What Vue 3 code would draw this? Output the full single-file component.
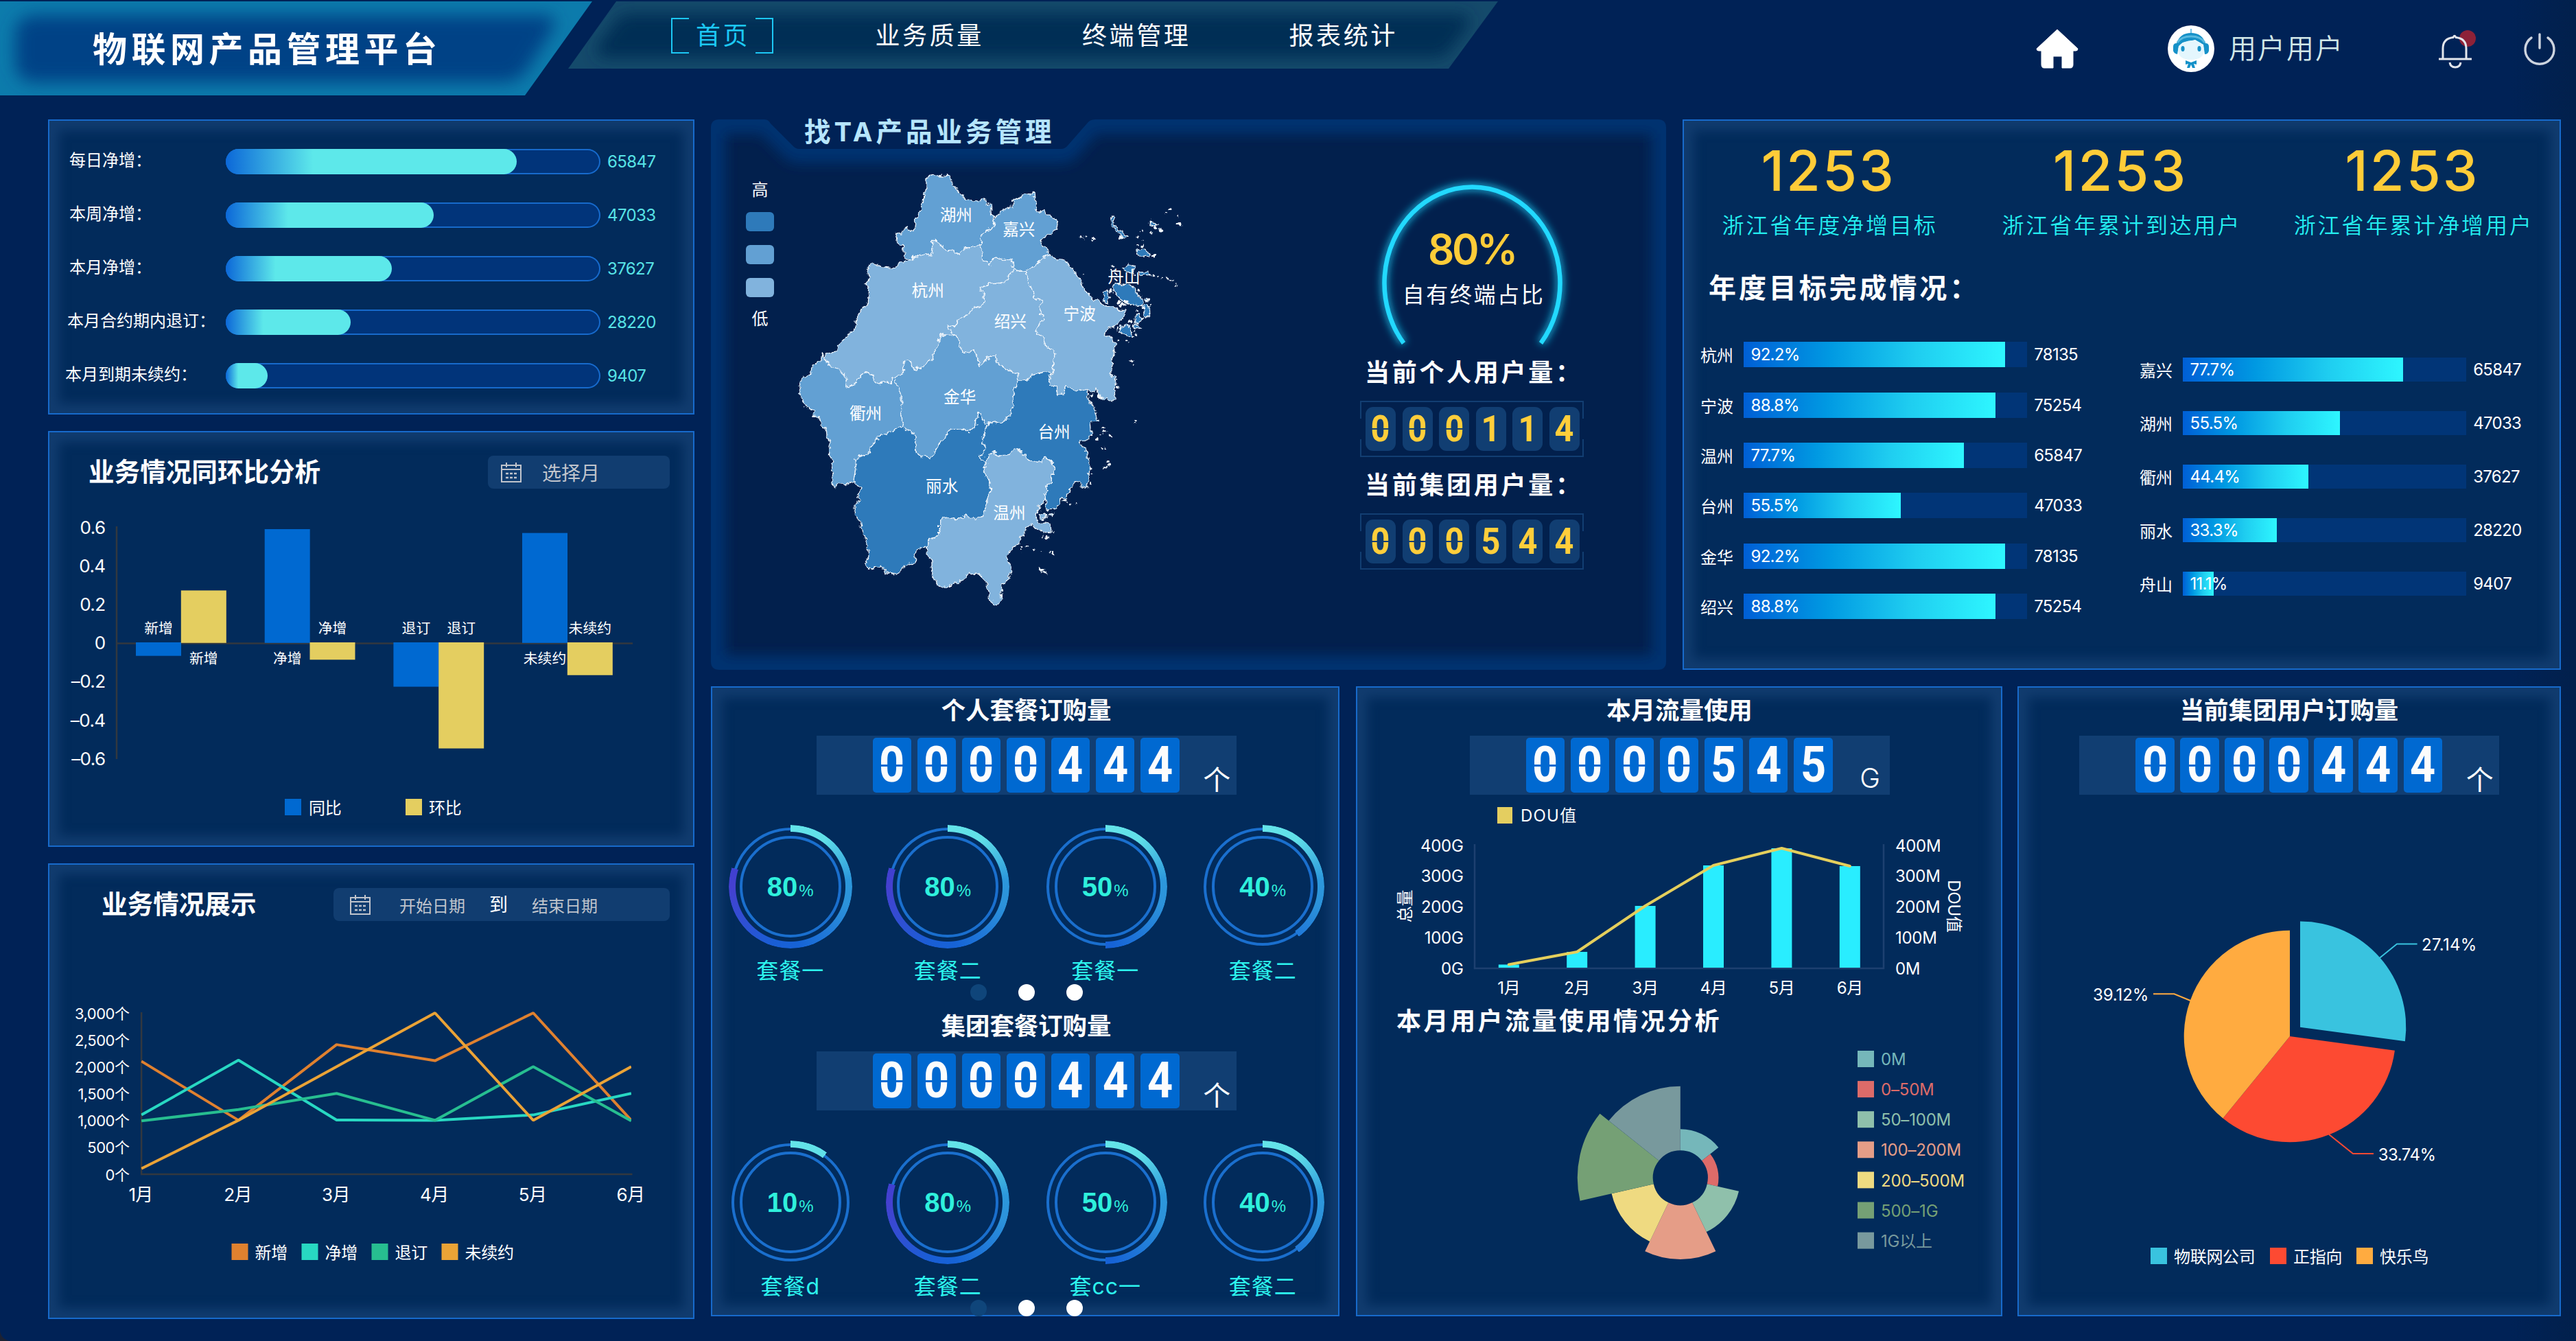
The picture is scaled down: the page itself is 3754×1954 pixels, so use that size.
<script setup>
const navItems = ['首页', '业务质量', '终端管理', '报表统计']

const growth = [
  { label: '每日净增：', value: 65847, pct: 77.7, indent: 29 },
  { label: '本周净增：', value: 47033, pct: 55.5, indent: 29 },
  { label: '本月净增：', value: 37627, pct: 44.4, indent: 29 },
  { label: '本月合约期内退订：', value: 28220, pct: 33.3, indent: 26 },
  { label: '本月到期未续约：', value: 9407, pct: 11.2, indent: 23 },
]

/* year-on-year / month-on-month bars */
const ratioTicks = [0.6, 0.4, 0.2, 0, -0.2, -0.4, -0.6]
const ratioY = (v) => 936.8 - v * 281
const ratioBars = [
  { name: '新增', x: 197, a: -0.07, b: 0.272 },
  { name: '净增', x: 384.7, a: 0.59, b: -0.09 },
  { name: '退订', x: 572.4, a: -0.23, b: -0.55 },
  { name: '未续约', x: 760, a: 0.57, b: -0.17 },
].flatMap((g) => [
  { name: g.name, x: g.x, v: g.a, color: '#0069d1' },
  { name: g.name, x: g.x + 65.8, v: g.b, color: '#e4ce60' },
])

/* trend lines */
const trendX = [205.6, 347, 490, 633.4, 776.6, 919.4]
const trendY = (v) => 1710.6 - (v / 3000) * 234.6
const trend = [
  { name: '新增', color: '#e0812f', data: [2100, 1000, 2410, 2110, 3000, 1000], x: 337 },
  { name: '净增', color: '#28d8c2', data: [1100, 2120, 1005, 1000, 1100, 1500], x: 439 },
  { name: '退订', color: '#27be90', data: [990, 1200, 1500, 1000, 2000, 990], x: 541 },
  { name: '未续约', color: '#eba336', data: [100, 1000, 2000, 3000, 1000, 2000], x: 643 },
]
const trendTicks = ['3,000个', '2,500个', '2,000个', '1,500个', '1,000个', '500个', '0个']
const months = ['1月', '2月', '3月', '4月', '5月', '6月']
const line = (xs, ys) => xs.map((x, i) => `${x},${ys[i]}`).join(' ')

/* province map */
const HIGH = '#2e7aba'
const MID = '#62a0d3'
const LOW = '#81b3dd'
const regions = [
  { name: '湖州', lx: 657, ly: 208, fill: MID, pts: '560,90 575,80 600,77 636,80 645,105 660,130 690,157 720,165 752,157 755,178 768,168 772,205 783,222 780,242 763,257 742,268 737,305 708,314 690,315 677,322 672,336 650,330 625,320 600,303 592,293 579,292 580,320 577,345 560,337 540,340 520,345 500,356 487,345 485,308 470,305 459,292 463,270 480,268 485,255 500,250 505,262 522,252 524,225 540,200 547,165 553,145 560,120' },
  { name: '嘉兴', lx: 862, ly: 257, fill: MID, pts: '783,222 800,200 820,190 838,183 840,155 865,155 877,140 900,140 912,130 915,180 925,200 945,190 952,212 975,215 988,235 985,255 960,275 932,292 945,315 963,336 940,348 915,375 883,391 862,393 843,385 838,352 775,352 766,375 756,358 743,355 740,325 737,305 742,268 763,257 780,242' },
  { name: '杭州', lx: 565, ly: 456, fill: LOW, pts: '500,356 520,345 540,340 560,337 577,345 580,320 579,292 592,293 600,303 625,320 650,330 672,336 677,322 690,315 708,314 737,305 740,325 743,355 756,358 766,375 775,352 838,352 843,385 815,432 780,430 745,440 733,447 748,465 750,495 735,508 710,512 695,535 665,550 655,572 630,572 640,592 655,602 610,600 600,615 595,640 585,655 580,680 560,690 548,706 530,706 522,717 512,700 510,687 485,690 485,730 460,740 450,738 448,760 430,755 398,760 385,735 370,718 350,730 335,745 325,765 300,768 297,740 278,712 250,705 225,675 230,662 265,655 270,635 300,605 330,575 333,540 358,510 368,500 372,440 358,432 375,413 366,385 385,365 415,378 455,382 475,360 492,360' },
  { name: '绍兴', lx: 834, ly: 557, fill: LOW, pts: '843,385 862,393 883,391 900,440 915,480 940,490 930,515 943,550 920,575 920,597 940,605 950,640 977,650 973,718 940,722 905,730 888,748 860,754 857,725 835,715 820,713 790,690 785,665 765,670 735,706 728,680 712,648 685,660 665,635 667,615 655,602 640,592 630,572 655,572 665,550 695,535 710,512 735,508 750,495 748,465 733,447 745,440 780,430 815,432' },
  { name: '宁波', lx: 1060, ly: 532, fill: LOW, pts: '883,391 915,375 940,348 963,336 990,355 1013,357 1050,400 1075,450 1105,488 1120,488 1145,505 1175,505 1180,520 1213,520 1205,540 1180,570 1155,580 1137,605 1165,612 1177,630 1168,670 1168,700 1160,735 1175,735 1175,800 1165,817 1150,805 1130,810 1118,775 1110,788 1085,778 1060,783 1015,768 1005,790 990,800 983,770 962,765 963,735 973,718 977,650 950,640 940,605 920,597 920,575 943,550 930,515 940,490 915,480 900,440' },
  { name: '衢州', lx: 362, ly: 856, fill: MID, pts: '225,675 250,705 278,712 297,740 300,768 325,765 335,745 350,730 370,718 385,735 398,760 430,755 448,760 450,738 460,740 462,765 480,800 478,850 483,900 475,900 440,920 410,925 385,955 372,990 350,995 327,1005 330,1030 322,1080 300,1088 270,1085 260,1097 250,1085 257,1060 248,1040 255,1010 245,1000 247,950 235,930 233,900 218,898 210,865 190,865 195,850 165,835 150,805 145,770 155,735 180,733 188,700 217,685 218,662' },
  { name: '金华', lx: 669, ly: 803, fill: MID, pts: '655,602 667,615 665,635 685,660 712,648 728,680 735,706 765,670 785,665 790,690 820,713 857,725 860,754 845,785 845,825 835,865 800,885 765,890 750,890 738,865 728,852 723,895 700,915 680,908 640,905 610,945 590,975 578,997 545,998 527,985 520,920 495,910 483,900 478,850 480,800 462,765 460,740 485,730 485,690 510,687 512,700 522,717 530,706 548,706 560,690 580,680 585,655 595,640 600,615 610,600' },
  { name: '丽水', lx: 611, ly: 1095, fill: HIGH, pts: '483,900 495,910 520,920 527,985 545,998 578,997 590,975 610,945 640,905 680,908 700,915 723,895 728,852 738,865 750,890 765,890 750,920 742,950 755,975 735,995 750,1010 760,1015 745,1045 765,1075 768,1110 757,1140 757,1160 745,1190 715,1200 690,1187 660,1203 615,1193 602,1210 602,1250 565,1275 562,1295 527,1298 522,1345 495,1350 465,1382 430,1377 425,1363 395,1357 375,1367 362,1345 372,1325 367,1285 355,1250 345,1210 328,1185 327,1155 345,1140 340,1120 345,1100 322,1080 330,1030 327,1005 350,995 372,990 385,955 410,925 440,920 475,900' },
  { name: '台州', lx: 977, ly: 918, fill: HIGH, pts: '860,754 888,748 905,730 940,722 968,718 963,735 962,765 983,770 990,800 1005,790 1015,768 1060,783 1085,778 1090,815 1103,825 1118,878 1095,880 1098,910 1095,938 1060,950 1085,985 1095,1040 1090,1075 1080,1097 1065,1090 1063,1078 1045,1075 1035,1100 1012,1135 993,1130 995,1150 985,1170 955,1173 948,1135 955,1087 968,1085 970,1055 982,1040 968,1015 945,997 937,1015 885,1005 865,975 845,970 835,990 795,995 780,978 765,990 760,1015 750,1010 735,995 755,975 742,950 750,920 765,890 800,885 835,865 845,825 845,785' },
  { name: '温州', lx: 831, ly: 1182, fill: LOW, pts: '760,1015 765,990 780,978 795,995 835,990 845,970 865,975 885,1005 937,1015 945,997 968,1015 982,1040 970,1055 968,1085 955,1087 948,1135 930,1160 915,1200 930,1213 965,1215 968,1243 945,1245 920,1235 905,1218 885,1235 860,1280 840,1295 823,1328 838,1360 832,1400 807,1415 803,1450 800,1475 785,1481 765,1465 763,1430 745,1390 723,1377 690,1385 665,1410 650,1402 640,1418 600,1423 580,1385 577,1330 560,1315 565,1275 602,1250 602,1210 615,1193 660,1203 690,1187 715,1200 745,1190 757,1160 757,1140 768,1110 765,1075 745,1045' },
]
const islands = [
  '1163,213 1172,212 1175,245 1200,265 1215,280 1203,282 1190,266 1168,248',
  '1170,445 1178,430 1195,438 1220,433 1240,450 1255,475 1268,482 1262,505 1235,502 1200,488 1175,465',
  '1137,460 1150,455 1160,480 1150,497 1137,490',
  '1200,382 1222,368 1240,378 1236,400 1216,396',
  '1250,320 1270,318 1292,335 1285,343 1252,342',
  '1195,575 1210,560 1228,580 1230,603 1215,605 1195,590',
  '1265,505 1288,505 1290,530 1278,545 1270,525',
  '1240,545 1255,530 1262,548 1250,565 1238,560',
  '1233,565 1252,570 1258,578 1240,580',
  '1255,392 1285,395 1288,405 1258,403',
  '1275,480 1285,478 1285,492 1275,495',
  '1292,228 1300,238 1315,238 1310,247 1290,243',
]
const wenIsles = ['928,1185 950,1182 955,1195 935,1202', '960,1185 975,1183 970,1193']
const dots = [
  [1356, 190, 5], [1343, 202, 4], [1380, 213, 4], [1385, 238, 8], [1293, 228, 4], [1310, 252, 6], [1325, 258, 6],
  [1267, 262, 3], [1252, 278, 3], [1256, 265, 2], [1294, 268, 3], [1070, 285, 4], [1080, 276, 3], [1106, 288, 3], [1073, 402, 2],
  [1250, 308, 4], [1265, 308, 5], [1262, 292, 3], [1303, 342, 5], [1198, 283, 6], [1212, 276, 4],
  [1170, 376, 5], [1163, 388, 3], [1172, 392, 3], [1298, 405, 4], [1313, 408, 4], [1330, 416, 3], [1348, 416, 4],
  [1357, 420, 4], [1363, 424, 3], [1378, 440, 4], [1240, 408, 4], [1162, 455, 6], [1253, 455, 4],
  [1190, 492, 6], [1202, 500, 7], [1216, 494, 6], [1228, 502, 5], [1210, 488, 5], [1195, 505, 5], [1280, 488, 6], [1295, 500, 3],
  [1248, 520, 4], [1270, 512, 5], [1225, 556, 5], [1185, 580, 4], [1186, 567, 3], [1240, 590, 4], [1246, 600, 4], [1235, 608, 5],
  [1217, 621, 3], [1187, 620, 3], [1265, 545, 6], [1284, 540, 4], [1174, 657, 3], [1230, 683, 6], [1235, 700, 3],
  [1180, 745, 3], [1188, 770, 7], [1177, 760, 4], [1128, 804, 6], [1097, 797, 5], [1243, 878, 4], [1240, 884, 3],
  [1135, 905, 5], [1143, 916, 5], [1160, 932, 5], [1118, 940, 6], [1128, 925, 3], [1130, 970, 3], [1142, 968, 3],
  [1150, 1012, 6], [1155, 1025, 6], [1145, 1032, 5], [1087, 1055, 5], [1104, 1050, 3], [1086, 1098, 3], [1096, 1082, 3],
  [1010, 1140, 6], [1020, 1146, 4], [1030, 1155, 3], [1050, 1152, 4], [940, 1257, 3], [953, 1260, 5], [974, 1244, 2],
  [872, 1293, 4], [890, 1288, 4], [908, 1298, 4], [870, 1304, 3], [935, 1308, 2], [963, 1310, 3], [973, 1313, 4],
  [932, 1364, 5], [940, 1368, 6], [946, 1376, 4], [937, 1377, 4],
]

const stats = ['浙江省年度净增目标', '浙江省年累计到达用户', '浙江省年累计净增用户']
const cityColumns = [
  {
    kind: 'six',
    rows: [
      ['杭州', 92.2, 78135], ['宁波', 88.8, 75254], ['温州', 77.7, 65847],
      ['台州', 55.5, 47033], ['金华', 92.2, 78135], ['绍兴', 88.8, 75254],
    ],
  },
  {
    kind: 'five',
    rows: [
      ['嘉兴', 77.7, 65847], ['湖州', 55.5, 47033], ['衢州', 44.4, 37627],
      ['丽水', 33.3, 28220], ['舟山', 11.1, 9407],
    ],
  },
]
const userCounts = [
  { title: '当前个人用户量：', digits: '000114' },
  { title: '当前集团用户量：', digits: '000544' },
]

const packages = [
  {
    title: '个人套餐订购量',
    rings: [['套餐一', 80], ['套餐二', 80], ['套餐一', 50], ['套餐二', 40]],
  },
  {
    title: '集团套餐订购量',
    rings: [['套餐d', 10], ['套餐二', 80], ['套cc一', 50], ['套餐二', 40]],
  },
]

/* traffic chart */
const flowX = [0, 1, 2, 3, 4, 5].map((i) => 2198.8 + i * 99.4)
const flowTop = [1405.5, 1387, 1320, 1261, 1236, 1262]
const flowTicks = [400, 300, 200, 100, 0]

const polar = (cx, cy, r, deg) => {
  const a = ((deg - 90) * Math.PI) / 180
  return `${(cx + r * Math.cos(a)).toFixed(2)} ${(cy + r * Math.sin(a)).toFixed(2)}`
}
const sector = (cx, cy, r0, r1, a0, a1) => {
  const big = a1 - a0 > 180 ? 1 : 0
  const inner = r0 ? `L${polar(cx, cy, r0, a1)}A${r0} ${r0} 0 ${big} 0 ${polar(cx, cy, r0, a0)}` : `L${cx} ${cy}`
  return `M${polar(cx, cy, r1, a0)}A${r1} ${r1} 0 ${big} 1 ${polar(cx, cy, r1, a1)}${inner}Z`
}
const rose = [
  ['0M', 71, '#75b7ba'], ['0–50M', 55.7, '#dd6b69'], ['50–100M', 87.4, '#8fc0ab'], ['100–200M', 118.8, '#e59d87'],
  ['200–500M', 102.8, '#efda81'], ['500–1G', 150, '#75a075'], ['1G以上', 133.5, '#78999d'],
].map(([name, r, color], i) => ({
  name, color, y: 1542 + i * 44.1,
  d: sector(2448.8, 1715.3, 40, r, (i * 360) / 7, ((i + 1) * 360) / 7),
}))

const pie = [
  { color: '#39c3df', d: sector(3352, 1496.7, 0, 154.3, 0, 97.7), lead: '3468,1395.7 3493,1375.5 3522.6,1375.5', text: '27.14%', x: 3529, w: 80 },
  { color: '#fd4a32', d: sector(3337, 1510, 0, 154.3, 97.7, 219.2), lead: '3394,1653 3429,1681 3459,1681', text: '33.74%', x: 3465.7, w: 84 },
  { color: '#ffab40', d: sector(3337, 1510, 0, 154.3, 219.2, 360), lead: '3192,1458 3168.4,1448.3 3138,1448.3', text: '39.12%', x: 3050, w: 81 },
]
const pieLabelY = [1376, 1682, 1449]
const pieLegend = [
  ['物联网公司', '#39c3df', 3134], ['正指向', '#fd4a32', 3308], ['快乐鸟', '#ffab40', 3434],
]
</script>

<template>
  <div class="page">
    <header class="top">
      <svg class="top-shape" viewBox="0 0 2200 144" width="2200" height="144">
        <defs>
          <clipPath id="brandClip"><path d="M0 2H863L765 139H0Z" /></clipPath>
          <clipPath id="navClip"><path d="M898 2H2183L2111 100H828Z" /></clipPath>
          <filter id="soft" x="-10%" y="-40%" width="120%" height="180%"><feGaussianBlur stdDeviation="12" /></filter>
          <filter id="soft2" x="-10%" y="-40%" width="120%" height="180%"><feGaussianBlur stdDeviation="11" /></filter>
        </defs>
        <g clip-path="url(#brandClip)">
          <rect width="870" height="140" fill="#0c7bac" />
          <path d="M50 22H800Q812 24 806 42L768 102Q756 120 732 120H50Q22 118 22 90V48Q24 24 50 22Z" fill="#004286" filter="url(#soft)" />
        </g>
        <g clip-path="url(#navClip)">
          <rect x="820" width="1370" height="110" fill="#144a6b" />
          <path d="M918 20H2130Q2146 22 2138 40L2112 74Q2106 84 2090 84H880Q864 82 872 66L896 34Q902 20 918 20Z" fill="#022e55" filter="url(#soft2)" />
        </g>
      </svg>
      <h1 class="brand">物联网产品管理平台</h1>
      <nav class="nav">
        <a v-for="(n, i) in navItems" :key="n" :class="['nav-item', { active: i === 0 }]">{{ n }}</a>
      </nav>
      <div class="tools">
        <svg class="home" width="62" height="58" viewBox="0 0 62 58"><path d="M31 1 61 29Q61 32 58 32H54V52Q54 57 50 57H38V40H25V57H12Q8 57 8 52V32H4Q1 32 1 29Z" fill="#fff" stroke="#fff" stroke-width="1" stroke-linejoin="round" /></svg>
        <svg class="avatar" width="68" height="68" viewBox="0 0 68 68">
          <circle cx="34" cy="34" r="34" fill="#fff" />
          <path d="M34 5V13" stroke="#7cc6e8" stroke-width="2.500" />
          <path d="M8 31Q8 26 13 26Q18 11 34 11Q50 11 55 26Q60 26 60 31V37Q59 42 54 42L52 28 40 21 22 25 16 30 14 42Q9 41 8 37Z" fill="#1691c8" />
          <path d="M15 35Q17 26 25 24Q36 20 45 24Q52 27 53 35Q53 50 34 50Q15 50 15 35Z" fill="#e4f6fd" />
          <path d="M14 25Q20 16 34 16T54 25" fill="none" stroke="#59b9df" stroke-width="3" />
          <ellipse cx="22" cy="34" rx="2.600" ry="4" fill="#1691c8" /><ellipse cx="46" cy="34" rx="2.600" ry="4" fill="#1691c8" />
          <path d="M26 51 34 54 42 51V57L38 56 40 62H36L34 57 32 62H28L30 56 26 57Z" fill="#1691c8" />
        </svg>
        <span class="user">用户用户</span>
        <svg class="bell" width="62" height="60" viewBox="0 0 62 60" fill="none">
          <circle cx="49" cy="15" r="12" fill="#8d2238" />
          <path d="M7 45H55M13 45V30Q13 15 28 13.500Q30 9 32 13.500Q47 15 47 30V45" stroke="#e3e6ec" stroke-width="3" />
          <path d="M23 50Q24 57 31 57T39 50" stroke="#e3e6ec" stroke-width="3" />
        </svg>
        <svg class="power" width="48" height="48" viewBox="0 0 48 48" fill="none" stroke="#cdd4df" stroke-width="3.400" stroke-linecap="round"><path d="M24 3V23M12 8A21 21 0 1 0 36 8" /></svg>
      </div>
    </header>

    <main class="board">
      <section class="col-left">
        <div class="panel growth">
          <div v-for="g in growth" :key="g.label" class="growth-row">
            <span class="growth-label" :style="{ paddingLeft: g.indent + 'px' }">{{ g.label }}</span>
            <div class="growth-track"><div class="growth-fill" :style="{ width: g.pct + '%' }"></div></div>
            <span class="growth-value">{{ g.value }}</span>
          </div>
        </div>

        <div class="panel ratio">
          <div class="panel-head ratio-head">
            <h2>业务情况同环比分析</h2>
            <div class="picker month">
              <svg width="30" height="30" viewBox="0 0 30 30" fill="none" stroke="#c0c4cc" stroke-width="2"><path d="M1 5H29V29H1ZM1 11H29M8 1V8M22 1V8" /><path d="M7 17H23M7 23H23" stroke-dasharray="4 2" stroke-width="2.500" /></svg>
              <span>选择月</span>
            </div>
          </div>
          <svg class="chart" viewBox="71 712 938 520" width="938" height="520">
            <text v-for="t in ratioTicks" :key="t" class="t26" x="152.500" :y="ratioY(t)" dy=".36em" text-anchor="end">{{ String(t).replace('-', '–') }}</text>
            <path d="M169 767V1106M169 937.500H921" stroke="#33383f" stroke-width="2.500" fill="none" />
            <g v-for="(b, i) in ratioBars" :key="i">
              <rect :x="b.x" width="66" :y="Math.min(ratioY(b.v), 936)" :height="Math.abs(936.8 - ratioY(b.v))" :fill="b.color" />
              <text class="t21" :x="b.x + 33" :y="b.v < 0 ? 915.5 : 960" dy=".36em" text-anchor="middle">{{ b.name }}</text>
            </g>
            <rect x="414" y="1164" width="24" height="24" fill="#0069d1" />
            <text class="t24" x="449" y="1177" dy=".36em">同比</text>
            <rect x="590" y="1164" width="24" height="24" fill="#e4ce60" />
            <text class="t24" x="624" y="1177" dy=".36em">环比</text>
          </svg>
        </div>

        <div class="panel trend">
          <div class="panel-head trend-head">
            <h2>业务情况展示</h2>
            <div class="picker range">
              <svg width="30" height="30" viewBox="0 0 30 30" fill="none" stroke="#c0c4cc" stroke-width="2"><path d="M1 5H29V29H1ZM1 11H29M8 1V8M22 1V8" /><path d="M7 17H23M7 23H23" stroke-dasharray="4 2" stroke-width="2.500" /></svg>
              <span>开始日期</span><b>到</b><span>结束日期</span>
            </div>
          </div>
          <svg class="chart" viewBox="71.500 1342 938 578" width="938" height="578">
            <defs><clipPath id="trendClip"><rect x="205" y="1460" width="714.500" height="260" /></clipPath></defs>
            <text v-for="(t, i) in trendTicks" :key="t" class="t22" x="188" :y="1477 + i * 39.1" dy=".36em" text-anchor="end">{{ t }}</text>
            <path d="M205.600 1475V1711H921" stroke="#33383f" stroke-width="2.500" fill="none" />
            <g clip-path="url(#trendClip)">
              <polyline v-for="s in trend" :key="s.name" :points="line(trendX, s.data.map(trendY))" fill="none" :stroke="s.color" stroke-width="4" stroke-linejoin="bevel" />
            </g>
            <text v-for="(m, i) in months" :key="m" class="t26" :x="trendX[i] - 1" y="1740.500" dy=".36em" text-anchor="middle">{{ m }}</text>
            <g v-for="s in trend" :key="s.color">
              <rect :x="s.x" y="1812" width="24" height="24" :fill="s.color" />
              <text class="t24" :x="s.x + 34" y="1825" dy=".36em">{{ s.name }}</text>
            </g>
          </svg>
        </div>
      </section>

      <section class="col-right">
        <div class="row-top">
          <div class="map-panel">
            <svg class="map-frame" viewBox="1036 174 1392 802" width="1392" height="802">
              <defs>
                <path id="frame" d="M1048 174H1114Q1120 174 1123 180L1155 212Q1159 217 1165 217H1546Q1552 217 1556 212L1584 180Q1588 174 1596 174H2416Q2428 174 2428 186V964Q2428 976 2416 976H1048Q1036 976 1036 964V186Q1036 174 1048 174Z" />
                <clipPath id="frameClip"><use href="#frame" /></clipPath>
                <filter id="frameBlur" filterUnits="userSpaceOnUse" x="1000" y="140" width="1470" height="880"><feGaussianBlur stdDeviation="9" /></filter>
              </defs>
              <g clip-path="url(#frameClip)">
                <use href="#frame" fill="#02204d" />
                <use href="#frame" fill="none" stroke="#00326f" stroke-width="42" filter="url(#frameBlur)" />
              </g>
            </svg>
            <h2 class="map-title">找TA产品业务管理</h2>
            <div class="map-body">
              <div class="legend">
                <span>高</span>
                <i class="high"></i><i class="mid"></i><i class="low"></i>
                <span>低</span>
              </div>
              <svg class="map" viewBox="130 40 1300 1480" width="580.400" height="660.700">
                <defs>
                  <filter id="rough" filterUnits="userSpaceOnUse" x="100" y="20" width="1400" height="1500">
                    <feTurbulence type="fractalNoise" baseFrequency="0.055" numOctaves="3" seed="4" result="n" />
                    <feDisplacementMap in="SourceGraphic" in2="n" scale="20" xChannelSelector="R" yChannelSelector="G" />
                  </filter>
                </defs>
                <g filter="url(#rough)" stroke="#f2f7fc" stroke-width="2.800" stroke-linejoin="round">
                  <polygon v-for="r in regions" :key="r.name" :points="r.pts" :fill="r.fill" />
                  <polygon v-for="p in wenIsles" :key="p" :points="p" :fill="LOW" />
                  <polygon v-for="p in islands" :key="p" :points="p" :fill="HIGH" />
                </g>
                <g filter="url(#rough)" fill="#f2f7fc">
                  <ellipse v-for="(d, i) in dots" :key="i" :cx="d[0]" :cy="d[1]" :rx="d[2]" :ry="d[2] * 0.8" />
                </g>
                <g class="city">
                  <text v-for="r in regions" :key="r.name" :x="r.lx" :y="r.ly" dy=".36em">{{ r.name }}</text>
                  <text x="1205" y="411" dy=".36em">舟山</text>
                </g>
              </svg>
              <div class="users">
                <svg class="gauge" viewBox="1982 240 326 280" width="326" height="280">
                  <defs><filter id="glow" filterUnits="userSpaceOnUse" x="1960" y="230" width="380" height="300"><feGaussianBlur stdDeviation="6" /></filter></defs>
                  <path d="M2045.500 500A128 140 0 1 1 2245.500 500" fill="none" stroke="#14a4cf" stroke-width="11" filter="url(#glow)" />
                  <path d="M2045.500 500A128 140 0 1 1 2245.500 500" fill="none" stroke="#22d9ff" stroke-width="6.500" />
                  <text class="gauge-num" x="2145" y="363" dy=".36em" text-anchor="middle">80%</text>
                  <text class="gauge-cap" x="2147.500" y="429" dy=".36em" text-anchor="middle">自有终端占比</text>
                </svg>
                <template v-for="u in userCounts" :key="u.title">
                  <h3 class="users-title">{{ u.title }}</h3>
                  <div class="users-box">
                    <span v-for="(d, i) in u.digits" :key="i" :class="['tile-sm', { zero: d === '0' }]"><em>{{ d }}</em></span>
                  </div>
                </template>
              </div>
            </div>
          </div>

          <div class="panel target">
            <div class="stats">
              <div v-for="s in stats" :key="s" class="stat"><strong>1253</strong><span>{{ s }}</span></div>
            </div>
            <h2 class="target-title">年度目标完成情况：</h2>
            <div class="cities">
              <div v-for="c in cityColumns" :key="c.kind" :class="['city-col', c.kind]">
                <div v-for="r in c.rows" :key="r[0]" class="city-row">
                  <span class="city-name">{{ r[0] }}</span>
                  <div class="city-track">
                    <div class="city-fill" :style="{ width: r[1] + '%' }"><span>{{ r[1] }}%</span></div>
                  </div>
                  <span class="city-value">{{ r[2] }}</span>
                </div>
              </div>
            </div>
          </div>
        </div>

        <div class="row-bottom">
          <div class="panel packages">
            <div v-for="p in packages" :key="p.title" class="package">
              <h3 class="count-title">{{ p.title }}</h3>
              <div class="counter">
                <span v-for="(d, i) in '0000444'" :key="i" :class="['tile', { zero: d === '0' }]"><em>{{ d }}</em></span>
                <span class="unit">个</span>
              </div>
              <div class="rings">
                <div v-for="(r, i) in p.rings" :key="i" class="ring-cell">
                  <div class="ring">
                    <svg width="180" height="180" viewBox="0 0 180 180" fill="none" stroke="#1a6fce" stroke-width="4"><circle cx="90" cy="90" r="84" /><circle cx="90" cy="90" r="72" /></svg>
                    <div class="ring-arc" :style="{ '--end': r[1] + '%' }"></div>
                    <p><b>{{ r[1] }}</b><small>%</small></p>
                  </div>
                  <span class="ring-name">{{ r[0] }}</span>
                </div>
              </div>
              <div class="pager"><i class="on"></i><i></i><i></i></div>
            </div>
          </div>

          <div class="panel flow">
            <h3 class="count-title">本月流量使用</h3>
            <div class="counter">
              <span v-for="(d, i) in '0000545'" :key="i" :class="['tile', { zero: d === '0' }]"><em>{{ d }}</em></span>
              <span class="unit latin">G</span>
            </div>
            <svg class="chart" viewBox="1978 1158 938 305" width="938" height="305">
              <rect x="2182" y="1176" width="22" height="24" fill="#e4ce60" />
              <text class="t24 wide" x="2216" y="1188.500" dy=".36em">DOU值</text>
              <g v-for="(t, i) in flowTicks" :key="t">
                <text class="t24" x="2132.500" :y="1232 + i * 44.8" dy=".36em" text-anchor="end">{{ t }}G</text>
                <text class="t24" x="2762" :y="1232 + i * 44.8" dy=".36em">{{ t }}M</text>
              </g>
              <path d="M2149 1230V1411H2745V1230" stroke="#1d4070" stroke-width="2.500" fill="none" />
              <rect v-for="(x, i) in flowX" :key="i" :x="x - 15" :y="flowTop[i]" width="30" :height="1410 - flowTop[i]" fill="#29edff" />
              <polyline :points="line(flowX, flowTop)" fill="none" stroke="#e5cf5c" stroke-width="4" stroke-linejoin="round" stroke-linecap="round" />
              <text v-for="(m, i) in months" :key="m" class="t24" :x="flowX[i]" y="1439" dy=".36em" text-anchor="middle">{{ m }}</text>
              <text class="t24" transform="translate(2047.500 1320.500) rotate(-90)" dy=".36em" text-anchor="middle">总量</text>
              <text class="t24" transform="translate(2847.500 1320.500) rotate(90)" dy=".36em" text-anchor="middle">DOU值</text>
            </svg>
            <h2 class="flow-title">本月用户流量使用情况分析</h2>
            <svg class="chart" viewBox="1978 1513 938 400" width="938" height="400">
              <path v-for="r in rose" :key="r.name" :d="r.d" :fill="r.color" />
              <g v-for="r in rose" :key="r.color" :fill="r.color">
                <rect x="2707" :y="r.y - 12" width="24" height="24" />
                <text class="rose-label" x="2741" :y="r.y + 0.5" dy=".36em">{{ r.name }}</text>
              </g>
            </svg>
          </div>

          <div class="panel orders">
            <h3 class="count-title">当前集团用户订购量</h3>
            <div class="counter">
              <span v-for="(d, i) in '0000444'" :key="i" :class="['tile', { zero: d === '0' }]"><em>{{ d }}</em></span>
              <span class="unit">个</span>
            </div>
            <svg class="chart" viewBox="2942 1158 788 756" width="788" height="756">
              <path v-for="p in pie" :key="p.text" :d="p.d" :fill="p.color" />
              <g v-for="(p, i) in pie" :key="p.color">
                <polyline :points="p.lead" fill="none" :stroke="p.color" stroke-width="2" />
                <text class="t24" :x="p.x" :y="pieLabelY[i]" dy=".36em" :textLength="p.w">{{ p.text }}</text>
              </g>
              <g v-for="l in pieLegend" :key="l[0]">
                <rect :x="l[2]" y="1818" width="24" height="24" :fill="l[1]" />
                <text class="t24" :x="l[2] + 34" y="1831" dy=".36em">{{ l[0] }}</text>
              </g>
            </svg>
          </div>
        </div>
      </section>
    </main>
  </div>
</template>

<style>
html, body { background: #1c2233; }
</style>

<style scoped>
.page {
  width: 3754px;
  height: 1954px;
  overflow: hidden;
  border-bottom-left-radius: 16px;
  background: linear-gradient(90deg, #002256 0, #002256 3660px, #02204c 3754px);
  color: #fff;
  font-family: Inter, "Noto Sans CJK SC", sans-serif;
}
h1, h2, h3, p { margin: 0; font-weight: 700; white-space: nowrap; }
svg { display: block; }
em, i { font-style: normal; }

/* header */
.top { position: relative; display: flex; height: 174px; box-sizing: border-box; }
.top-shape { position: absolute; left: 0; top: 0; }
.brand { position: relative; width: 843px; padding-left: 135px; line-height: 145px; font-size: 50px; letter-spacing: 6.500px; }
.nav { position: relative; display: flex; height: 52px; margin-top: 26px; }
.nav-item {
  width: 156px; margin-right: 145.500px; line-height: 52px; box-sizing: border-box;
  font-size: 36px; letter-spacing: 3.600px; white-space: nowrap;
}
.nav-item.active {
  width: 149px; margin-right: 148.500px; padding-left: 36px; color: #1cc8f5;
  background:
    linear-gradient(#1cc8f5, #1cc8f5) 0 0 / 26px 2px no-repeat,
    linear-gradient(#1cc8f5, #1cc8f5) 0 100% / 26px 2px no-repeat,
    linear-gradient(#1cc8f5, #1cc8f5) 100% 0 / 26px 2px no-repeat,
    linear-gradient(#1cc8f5, #1cc8f5) 100% 100% / 26px 2px no-repeat,
    linear-gradient(#1cc8f5, #1cc8f5) 0 0 / 2px 100% no-repeat,
    linear-gradient(#1cc8f5, #1cc8f5) 100% 0 / 2px 100% no-repeat;
}
.tools { display: flex; align-items: center; height: 142px; margin-left: auto; padding-right: 29px; }
.avatar { margin-left: 130px; }
.user { margin-left: 21px; width: 168px; font-size: 40px; font-weight: 350; letter-spacing: 2px; line-height: 60px; color: #d2e8e8; }
.bell { margin-left: 131px; }
.power { margin-left: 68px; }

/* board */
.board { display: flex; gap: 24px; padding-left: 70px; }
.col-left { display: flex; flex-direction: column; gap: 24px; width: 942px; }
.panel {
  box-sizing: border-box; border: 2px solid #176acb; background: #022b5b;
  box-shadow: inset 0 0 16px 14px #113c6f;
}
.growth { height: 430px; padding-top: 20px; }
.growth-row { display: flex; align-items: center; height: 78px; }
.growth-label { width: 257px; box-sizing: border-box; font-size: 24px; line-height: 30px; white-space: nowrap; margin-top: -3px; }
.growth-track { width: 546px; height: 37px; border-radius: 19px; background: #01347a; box-shadow: inset 0 0 0 2px #176acb; }
.growth-fill { height: 37px; border-radius: 19px; background: linear-gradient(90deg, #0c68d8, #5de8ea 30%); }
.growth-value { margin-left: 10px; font-size: 24px; letter-spacing: -0.6px; color: #57e3e6; }

.ratio { height: 606px; }
.trend { height: 664px; }
.panel-head { display: flex; justify-content: space-between; align-items: center; padding-right: 34px; }
.panel-head h2 { font-size: 37.600px; line-height: 50px; }
.ratio-head { height: 48px; padding-top: 34px; padding-left: 57px; }
.trend-head { height: 48px; padding-top: 34px; padding-left: 76px; }
.picker { display: flex; align-items: center; height: 48px; box-sizing: border-box; border-radius: 8px; background: #113d70; color: #c0c4cc; }
.picker.month { width: 265px; padding-left: 19px; font-size: 28px; }
.picker.month span { margin-left: 30px; }
.picker.range { width: 490px; padding-left: 24px; font-size: 24px; }
.picker.range span:first-of-type { margin-left: 42px; }
.picker.range b { margin: -4px 35px 0 35px; color: #fff; font-weight: 400; font-size: 27px; }

.t26, .t24, .t22, .t21 { fill: #fff; }
.t26 { font-size: 26px; letter-spacing: -0.6px; }
.t24 { font-size: 24px; letter-spacing: -0.3px; }
.t22 { font-size: 22px; letter-spacing: -0.5px; }
.t21 { font-size: 20.800px; }
.t24.wide { letter-spacing: 1.200px; }

.col-right { display: flex; flex-direction: column; gap: 24px; }
.row-top { display: flex; gap: 24px; height: 802px; }
.row-bottom { display: flex; gap: 24px; height: 918px; }

/* map */
.map-panel { position: relative; width: 1392px; }
.map-frame { position: absolute; left: 0; top: 0; }
.map-title { position: absolute; left: 136px; top: -7px; font-size: 38.500px; line-height: 50px; letter-spacing: 5px; color: #b6e5fc; }
.map-body { position: relative; display: flex; padding-left: 51px; }
.legend { display: flex; flex-direction: column; align-items: center; gap: 20px; width: 41px; margin-top: 87px; }
.legend span { font-size: 24px; line-height: 32px; }
.legend span:first-child { margin-bottom: -4px; }
.legend span:last-child { margin-top: -4px; }
.legend i { width: 41px; height: 28px; border-radius: 6px; }
.high { background: #2e7aba; }
.mid { background: #62a0d3; }
.low { background: #81b3dd; }
.map { margin: 64px 0 0 30px; }
.city text { font-size: 53px; text-anchor: middle; fill: #fff; font-weight: 400; }
.users { width: 326px; margin: 66px 0 0 243.600px; }
.gauge { overflow: visible; }
.gauge-num { font-size: 60px; font-weight: 600; fill: #ffcc38; letter-spacing: -3.500px; }
.gauge-cap { font-size: 32px; letter-spacing: 2.600px; fill: #fff; font-weight: 400; }
.users-title { padding-left: 7px; font-size: 36px; letter-spacing: 3.700px; line-height: 46px; }
.users-box {
  display: flex; align-items: center; gap: 9.600px; box-sizing: border-box; height: 82px; margin: 18px 0; padding-left: 8px;
  background:
    linear-gradient(#123e72, #123e72) 0 0 / 100% 2px no-repeat,
    linear-gradient(#123e72, #123e72) 0 100% / 100% 2px no-repeat,
    linear-gradient(#123e72 0 26px, transparent 26px 56px, #123e72 56px) 0 0 / 2px 100% no-repeat,
    linear-gradient(#123e72 0 26px, transparent 26px 56px, #123e72 56px) 100% 0 / 2px 100% no-repeat;
}
.tile-sm, .tile { position: relative; display: flex; align-items: center; justify-content: center; font-family: Roboto, sans-serif; font-weight: 700; }
.tile-sm { width: 44px; height: 64px; border-radius: 11px; background: #113e72; color: #ffce3b; font-size: 54px; }
.tile { width: 56.500px; height: 80px; border-radius: 5px; background: #0069d1; color: #fcfcfc; font-size: 72px; }
.tile em, .tile-sm em { line-height: 1; transform: scaleX(0.9); }
.zero::after { content: ""; position: absolute; left: 0; right: 0; top: calc(50% - 1px); height: 3px; background: #0069d1; }
.tile-sm.zero::after { background: #113e72; height: 2px; }

/* targets */
.target { width: 1280px; }
.stats { display: flex; padding-top: 33px; }
.stat { flex: 1; display: flex; flex-direction: column; align-items: center; }
.stat strong { margin-left: -4px; font-size: 81px; line-height: 80px; font-weight: 500; letter-spacing: 3px; color: #ffcc38; }
.stat span { margin-top: 20px; font-size: 32px; line-height: 40px; letter-spacing: 2.900px; color: #24eef0; font-weight: 350; white-space: nowrap; }
.target-title { margin-top: 46px; padding-left: 36px; font-size: 40px; line-height: 50px; letter-spacing: 3.900px; }
.cities { display: flex; align-items: flex-start; padding-left: 24px; }
.city-col { width: 640px; flex: none; padding-top: 35px; }
.city-col.five { padding-top: 54px; width: 600px; }
.city-row { display: flex; align-items: center; height: 73.400px; font-size: 24px; letter-spacing: -0.7px; }
.five .city-row { height: 78.200px; }
.city-name { width: 62.500px; letter-spacing: 0; }
.city-track { width: 413.700px; height: 37px; background: #013577; }
.five .city-track, .five .city-fill { height: 35px; }
.city-fill { height: 37px; display: flex; align-items: center; white-space: nowrap; background: linear-gradient(90deg, #005fd6, #0099e2 33%, #1fcdf0 66%, #2ef6ff); }
.city-fill span { padding-left: 11px; }
.city-value { margin-left: 10px; }

/* counters */
.count-title { text-align: center; font-size: 35.400px; line-height: 44px; padding-top: 12px; }
.counter { display: flex; align-items: center; gap: 8.600px; box-sizing: border-box; width: 612px; height: 86px; margin: 14px auto 0; padding-left: 82px; background: #113e72; }
.unit { align-self: flex-end; width: 42px; margin: 0 0 -4px 25px; text-align: center; font-size: 40px; font-weight: 400; line-height: 50px; }
.unit.latin { font-weight: 300; margin-bottom: -1px; }

.packages { width: 916px; padding-left: 3px; }
.package { height: 460px; }
.rings { display: grid; grid-template-columns: repeat(4, 229.500px); margin: 44px 0 0 -4px; }
.ring-cell { display: flex; flex-direction: column; align-items: center; }
.ring { position: relative; width: 180px; height: 180px; }
.ring svg, .ring-arc { position: absolute; left: 0; top: 0; }
.ring-arc {
  width: 180px; height: 180px; border-radius: 50%;
  background: conic-gradient(#64e4e9 0, #60dfe8 10%, #2c98dc 23%, #2c92da 30%, #1663d6 48%, #1a5ed5 55%, #4540d0 75%, #4040d0 80%);
  mask: radial-gradient(circle, transparent 79.500px, #000 80.500px), conic-gradient(#000 var(--end), transparent var(--end));
  mask-composite: intersect;
}
.ring p { position: relative; display: flex; align-items: baseline; justify-content: center; line-height: 180px; color: #2ff0dc; }
.ring b { font-family: "Liberation Sans", sans-serif; font-size: 40px; font-weight: 700; }
.ring small { font-family: "Liberation Sans", sans-serif; font-size: 24px; font-weight: 400; margin-left: 2px; }
.ring-name { margin-top: 11px; font-size: 32px; line-height: 43px; letter-spacing: 1px; color: #2df5ee; }
.pager { display: flex; justify-content: center; gap: 46px; margin-top: -2px; position: relative; }
.pager i { width: 24px; height: 24px; border-radius: 50%; background: #fff; }
.pager i.on { background: #0f457a; }

.flow { width: 942px; padding-left: 1px; }
.flow .chart { margin-left: -1px; }
.flow-title { padding-left: 56px; font-size: 36px; line-height: 51px; letter-spacing: 3.500px; }
.rose-label { font-size: 24px; letter-spacing: -0.2px; }
.orders { width: 792px; margin-left: -2px; }
</style>
